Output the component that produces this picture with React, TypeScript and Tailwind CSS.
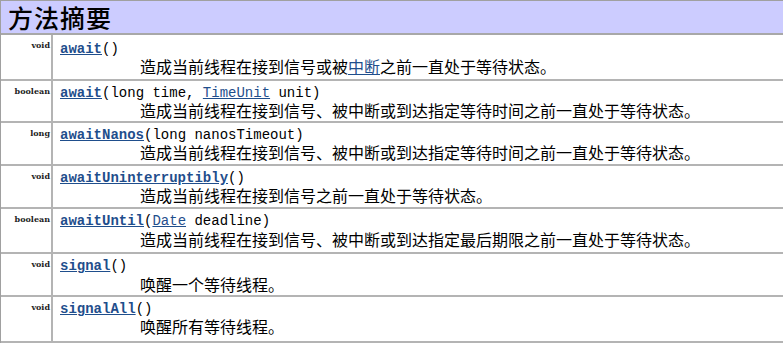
const rows = [
  {
    type: "void",
    name: "await",
    args: [] as (string | { link: string })[],
    desc: (
      <>
        造成当前线程在接到信号或被
        <a className="text-[#1f4e8c] underline">中断</a>
        之前一直处于等待状态。
      </>
    ),
    h: "h-[46px]",
    top: "pt-[6px]",
    gap: "pt-0",
  },
  {
    type: "boolean",
    name: "await",
    args: ["long time, ", { link: "TimeUnit" }, " unit"],
    desc: "造成当前线程在接到信号、被中断或到达指定等待时间之前一直处于等待状态。",
    h: "h-[42px]",
    top: "pt-[4px]",
    gap: "pt-0",
  },
  {
    type: "long",
    name: "awaitNanos",
    args: ["long nanosTimeout"],
    desc: "造成当前线程在接到信号、被中断或到达指定等待时间之前一直处于等待状态。",
    h: "h-[43px]",
    top: "pt-[4px]",
    gap: "pt-0",
  },
  {
    type: "void",
    name: "awaitUninterruptibly",
    args: [],
    desc: "造成当前线程在接到信号之前一直处于等待状态。",
    h: "h-[43px]",
    top: "pt-[4px]",
    gap: "pt-0",
  },
  {
    type: "boolean",
    name: "awaitUntil",
    args: [{ link: "Date" }, " deadline"],
    desc: "造成当前线程在接到信号、被中断或到达指定最后期限之前一直处于等待状态。",
    h: "h-[45px]",
    top: "pt-[4px]",
    gap: "pt-[1px]",
  },
  {
    type: "void",
    name: "signal",
    args: [],
    desc: "唤醒一个等待线程。",
    h: "h-[43px]",
    top: "pt-[4px]",
    gap: "pt-[1px]",
  },
  {
    type: "void",
    name: "signalAll",
    args: [],
    desc: "唤醒所有等待线程。",
    h: "h-[46px]",
    top: "pt-[4px]",
    gap: "pt-0",
  },
];

export default function App() {
  return (
    <div className="w-[783px] h-[344px] overflow-hidden bg-white font-['Noto_Sans_CJK_SC',sans-serif] text-black">
      <div className="border-l border-t border-[#a0a0a0]">
        <div className="h-[34px] bg-[#ccccff] border-b-2 border-[#a8a8a8] pl-[7px] flex items-center">
          <span className="text-[25px] leading-none font-medium tracking-[1px]">
            方法摘要
          </span>
        </div>
        {rows.map((r, i) => (
          <div key={i} className={`flex ${r.h} border-b-2 border-[#b4b4b4]`}>
            <div className="w-[52px] shrink-0 border-r-2 border-[#b4b4b4] pr-[1px] pt-[5px] text-right font-['DejaVu_Serif',serif] text-[8px] leading-[10px] font-bold text-[#222]">
              {r.type}
            </div>
            <div className={`pl-[7px] ${r.top} flex flex-col`}>
              <div className="font-['Liberation_Mono',monospace] text-[14px] leading-[16px]">
                <a className="font-bold text-[#1f4e8c] underline">{r.name}</a>
                (
                {r.args.map((a, j) =>
                  typeof a === "string" ? (
                    <span key={j} className="whitespace-pre">
                      {a}
                    </span>
                  ) : (
                    <a key={j} className="text-[#1f4e8c] underline">
                      {a.link}
                    </a>
                  )
                )}
                )
              </div>
              <div className={`pl-[80px] ${r.gap} text-[16px] leading-[18px]`}>
                {r.desc}
              </div>
            </div>
          </div>
        ))}
      </div>
    </div>
  );
}
